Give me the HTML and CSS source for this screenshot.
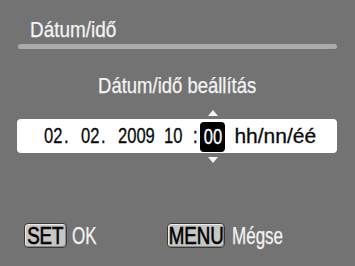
FILE: index.html
```html
<!DOCTYPE html>
<html>
<head>
<meta charset="utf-8">
<link rel="stylesheet" href="styles.css">
</head>
<body>
<div class="screen">
  <div class="title"><span class="cond">Dátum/idő</span></div>
  <div class="rule"></div>
  <div class="subtitle"><span class="cond mid">Dátum/idő beállítás</span></div>
  <div class="datebox">
    <span class="seg cell4"><span class="num">02<span class="dot">.</span></span></span>
    <span class="seg cell4"><span class="num">02<span class="dot">.</span></span></span>
    <span class="seg cell5"><span class="num">2009</span></span>
    <span class="seg cell3"><span class="num">10</span></span>
    <span class="seg cell1"><span class="num">:</span></span>
    <span class="seg sel"><span class="num mid">00</span></span>
    <span class="seg fmt">hh/nn/éé</span>
  </div>
  <div class="footer">
    <span class="key set"><span class="keytext">SET</span></span>
    <span class="label ok"><span class="labeltext">OK</span></span>
    <span class="key menu"><span class="keytext">MENU</span></span>
    <span class="label cancel"><span class="labeltext">Mégse</span></span>
  </div>
</div>
</body>
</html>
```
FILE: styles.css
```css
html, body {
  margin: 0;
  padding: 0;
}
body {
  background: #737373;
  font-family: "Liberation Sans", Arial, sans-serif;
  color: #f4f4f4;
}
.screen {
  width: 355px;
  height: 266px;
  overflow: hidden;
}
.cond, .num, .keytext, .labeltext {
  display: inline-block;
  white-space: nowrap;
  transform-origin: left center;
}
.cond {
  transform: scaleX(0.86);
  -webkit-text-stroke: 0.25px #f4f4f4;
}
.mid { transform-origin: center center; }
.title {
  padding: 17px 0 0 30px;
  font-size: 22px;
  line-height: 25px;
}
.rule {
  margin: 2px 18px 0 18px;
  height: 5px;
  border-radius: 3px;
  background: #ababab;
}
.subtitle {
  margin-top: 24px;
  text-align: center;
  font-size: 22px;
  line-height: 25px;
}
.subtitle .cond { transform: scaleX(0.84); }
.datebox {
  margin: 21px 18px 0 17px;
  height: 34px;
  background: #fff;
  border-radius: 4px;
  display: flex;
  align-items: center;
  padding-left: 27px;
  color: #0a0a0a;
  font-size: 21.5px;
}
.seg {
  line-height: 24px;
  flex: none;
}
.num {
  transform: scaleX(0.77);
  -webkit-text-stroke: 0.3px currentColor;
}
.dot { margin-left: 2px; }
.cell1 { width: 9.2px; display: flex; justify-content: center; }
.cell3 { width: 27.6px; }
.cell4 { width: 36.8px; }
.cell5 { width: 46px; }
.sel {
  position: relative;
  width: 25px;
  height: 30px;
  margin-top: 2px;
  background: #000;
  color: #fff;
  border-radius: 4px;
  display: flex;
  align-items: center;
  justify-content: center;
}
.sel::before, .sel::after {
  content: "";
  position: absolute;
  left: 8px;
  width: 0;
  height: 0;
  border-left: 5px solid transparent;
  border-right: 5px solid transparent;
}
.sel::before {
  top: -12px;
  border-bottom: 6px solid #f4f4f4;
}
.sel::after {
  bottom: -11px;
  border-top: 6px solid #f4f4f4;
}
.fmt {
  margin-left: 9px;
  font-size: 21px;
  -webkit-text-stroke: 0.3px currentColor;
}
.footer {
  margin-top: 70px;
  display: flex;
  align-items: center;
  padding-left: 24px;
}
.key {
  box-sizing: border-box;
  height: 25px;
  line-height: 23px;
  display: flex;
  justify-content: center;
  background: #c6c6c6;
  color: #000;
  border: 1px solid #3a3a3a;
  border-radius: 4px;
  box-shadow: inset -1px -1px 0 #8a8a8a, inset 1px 1px 0 #ececec;
  font-size: 24px;
}
.keytext {
  transform: scaleX(0.78);
  transform-origin: center center;
  -webkit-text-stroke: 0.6px #000;
}
.set { width: 43px; }
.menu { width: 58px; }
.label {
  font-size: 23px;
  line-height: 24px;
}
.labeltext {
  transform: scaleX(0.74);
  -webkit-text-stroke: 0.25px #f4f4f4;
}
.ok { width: 100px; padding-left: 5px; box-sizing: border-box; }
.cancel { margin-left: 7px; }
```
